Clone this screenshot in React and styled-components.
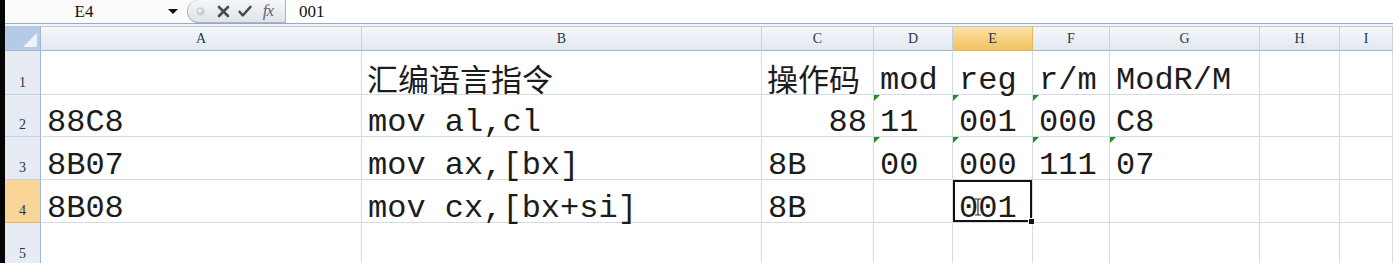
import React from "react";
import styled, { createGlobalStyle, css } from "styled-components";

const GlobalStyle = createGlobalStyle`
  html, body { margin: 0; padding: 0; background: #ffffff; overflow: hidden; }
  * { box-sizing: border-box; }
`;

const Page = styled.div`
  display: flex;
  width: 1393px;
  height: 263px;
  overflow: hidden;
`;

const Edge = styled.div`
  width: 5px;
  flex: none;
  background: #050505;
`;

const Main = styled.div`
  flex: 1;
  display: flex;
  flex-direction: column;
  min-width: 0;
  & > * { flex: none; }
`;

const FormulaBar = styled.div`
  display: flex;
  align-items: stretch;
  height: 24px;
  background: #fbfbfb;
  border-bottom: 1px solid #9aabbf;
`;

const NameBox = styled.div`
  width: 178px;
  display: flex;
  align-items: center;
`;

const NameText = styled.div`
  flex: 1;
  text-align: center;
  font-family: "Liberation Serif", serif;
  font-size: 17px;
  color: #111;
`;

const DropArrow = styled.div`
  width: 20px;
  display: flex;
  justify-content: center;
  align-items: center;
  &::after {
    content: "";
    border-left: 5px solid transparent;
    border-right: 5px solid transparent;
    border-top: 5px solid #111;
  }
`;

const Pill = styled.div`
  margin-left: 4px;
  width: 99px;
  height: 23px;
  display: flex;
  align-items: center;
  padding-left: 4px;
  border: 1px solid #a9b6c6;
  border-top: none;
  border-top-left-radius: 12px;
  border-bottom-left-radius: 12px;
  background: linear-gradient(#f4f6f9, #dfe4eb);
`;

const PillIcon = styled.span`
  display: flex;
  justify-content: center;
  align-items: center;
  width: ${(p) => p.$w}px;
  color: #4a4f57;
`;

const Fx = styled.span`
  font-family: "Liberation Serif", serif;
  font-style: italic;
  font-size: 17px;
  color: #5f646d;
  letter-spacing: -1px;
`;

const FormulaText = styled.div`
  flex: 1;
  display: flex;
  align-items: center;
  padding-left: 13px;
  background: #ffffff;
  font-family: "Liberation Serif", serif;
  font-size: 17px;
  color: #111;
`;

const Spacer = styled.div`
  height: 3px;
  background: #f1f4f8;
  border-bottom: 1px solid #b9c6d6;
`;

const Sheet = styled.div`
  display: grid;
  grid-template-columns: 36px 321px 400px 112px 79px 80px 77px 150px 80px 1fr;
  grid-template-rows: 24px 44px 42px 43px 43px 43px;
  background: #ffffff;
`;

const Corner = styled.div`
  position: relative;
  background: #b5cae8;
  border-right: 1px solid #9eb6ce;
  border-bottom: 1px solid #9eb6ce;
  &::after {
    content: "";
    position: absolute;
    right: 3px;
    bottom: 3px;
    border-left: 14px solid transparent;
    border-bottom: 14px solid #eef3fa;
  }
`;

const ColHeader = styled.div`
  display: flex;
  align-items: center;
  justify-content: center;
  font-family: "Liberation Serif", serif;
  font-size: 14px;
  color: #27354a;
  border-right: 1px solid #c6d2e0;
  border-bottom: 1px solid #9eb6ce;
  background: linear-gradient(#f6f8fb, #e2e8f0);
  ${(p) =>
    p.$active &&
    css`
      background: linear-gradient(#fbe0a6, #f2c263);
      border-right-color: #eab85a;
      border-bottom-color: #e9b457;
    `}
`;

const RowHeader = styled.div`
  display: flex;
  align-items: flex-end;
  justify-content: center;
  padding-bottom: 3px;
  font-family: "Liberation Serif", serif;
  font-size: 14px;
  color: #27354a;
  background: #e7ecf4;
  border-right: 1px solid #9eb6ce;
  border-bottom: 1px solid #c5d1e0;
  ${(p) =>
    p.$active &&
    css`
      background: #f9d597;
      border-bottom-color: #e6b45a;
    `}
`;

const Cell = styled.div`
  position: relative;
  display: flex;
  align-items: flex-end;
  justify-content: ${(p) => (p.$right ? "flex-end" : "flex-start")};
  padding: 0 6px 0 6px;
  border-right: 1px solid #d5dbe6;
  border-bottom: 1px solid #d5dbe6;
  font-family: "Liberation Mono", "Noto Sans CJK SC", monospace;
  font-size: 32px;
  line-height: 27px;
  color: #1c1c1c;
  white-space: pre;
  ${(p) =>
    p.$cjk &&
    css`
      font-family: "Noto Sans CJK SC", sans-serif;
      font-size: 31px;
      line-height: 31px;
      padding-left: 5px;
      padding-bottom: 1px;
    `}
  ${(p) =>
    p.$flag &&
    css`
      &::before {
        content: "";
        position: absolute;
        left: 0;
        top: 0;
        border-right: 6px solid transparent;
        border-top: 6px solid #1f8f1f;
      }
    `}
  ${(p) =>
    p.$selected &&
    css`
      box-shadow: inset 0 0 0 2px #111;
      &::after {
        content: "";
        position: absolute;
        right: -3px;
        bottom: -3px;
        width: 5px;
        height: 5px;
        background: #111;
        border: 1px solid #fff;
        z-index: 2;
      }
    `}
`;

const Cursor = styled.svg`
  position: absolute;
  left: 21px;
  top: 18px;
`;

const cols = ["A", "B", "C", "D", "E", "F", "G", "H", "I"];

const t = (v, o = {}) => ({ v, ...o });

const rows = [
  [t(""), t("汇编语言指令", { cjk: true }), t("操作码", { cjk: true }), t("mod"), t("reg"), t("r/m"), t("ModR/M"), t(""), t("")],
  [t("88C8"), t("mov al,cl"), t("88", { right: true }), t("11", { flag: true }), t("001", { flag: true }), t("000", { flag: true }), t("C8"), t(""), t("")],
  [t("8B07"), t("mov ax,[bx]"), t("8B"), t("00", { flag: true }), t("000", { flag: true }), t("111", { flag: true }), t("07", { flag: true }), t(""), t("")],
  [t("8B08"), t("mov cx,[bx+si]"), t("8B"), t(""), t("001", { selected: true }), t(""), t(""), t(""), t("")],
  [t(""), t(""), t(""), t(""), t(""), t(""), t(""), t(""), t("")],
];

export default function App() {
  return (
    <>
      <GlobalStyle />
      <Page>
        <Edge />
        <Main>
          <FormulaBar>
            <NameBox>
              <NameText>E4</NameText>
              <DropArrow />
            </NameBox>
            <Pill>
              <PillIcon $w={16}>
                <svg width="9" height="9" viewBox="0 0 9 9">
                  <circle cx="4.5" cy="4.5" r="4" fill="#c9ced6" />
                  <circle cx="3.8" cy="3.8" r="2" fill="#eef0f3" />
                </svg>
              </PillIcon>
              <PillIcon $w={30}>
                <svg width="13" height="13" viewBox="0 0 13 13">
                  <path d="M2 2 L11 11 M11 2 L2 11" stroke="#474b53" strokeWidth="2.6" strokeLinecap="round" />
                </svg>
              </PillIcon>
              <PillIcon $w={14}>
                <svg width="16" height="14" viewBox="0 0 16 14">
                  <path d="M1 7 L5.5 12 L15 1.5" stroke="#474b53" strokeWidth="2.8" fill="none" strokeLinejoin="round" />
                </svg>
              </PillIcon>
              <PillIcon $w={32}>
                <Fx>fx</Fx>
              </PillIcon>
            </Pill>
            <FormulaText>001</FormulaText>
          </FormulaBar>
          <Spacer />
          <Sheet>
            <Corner />
            {cols.map((c) => (
              <ColHeader key={c} $active={c === "E"}>
                {c}
              </ColHeader>
            ))}
            {rows.map((row, ri) => (
              <React.Fragment key={ri}>
                <RowHeader $active={ri === 3}>{ri + 1}</RowHeader>
                {row.map((cell, ci) => (
                  <Cell
                    key={ci}
                    $right={cell.right}
                    $flag={cell.flag}
                    $selected={cell.selected}
                    $cjk={cell.cjk}
                  >
                    {cell.v}
                    {cell.selected && (
                      <Cursor width="8" height="18" viewBox="0 0 8 18">
                        <path d="M1 1 H7 M4 1 V17 M1 17 H7" stroke="#333" strokeWidth="1.2" fill="none" />
                      </Cursor>
                    )}
                  </Cell>
                ))}
              </React.Fragment>
            ))}
          </Sheet>
        </Main>
      </Page>
    </>
  );
}
